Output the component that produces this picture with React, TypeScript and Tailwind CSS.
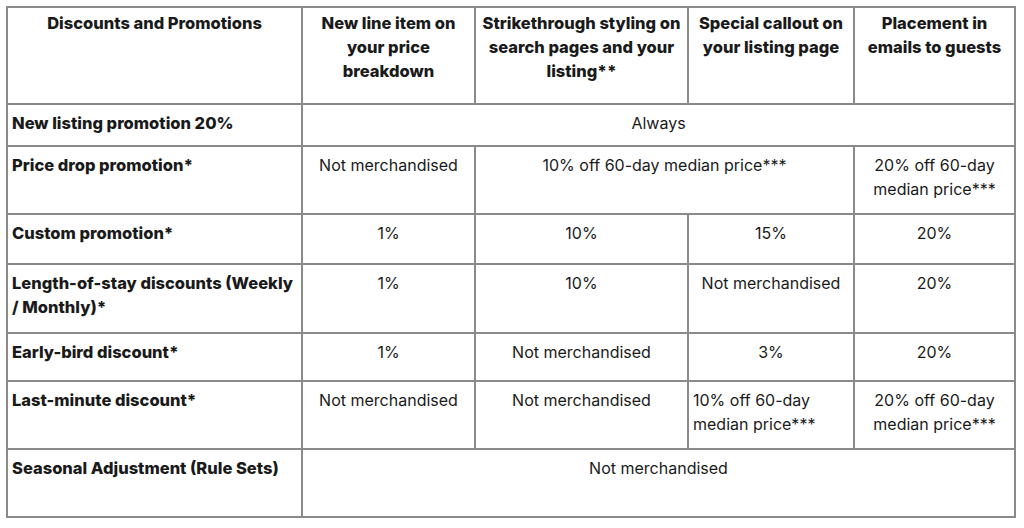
import React from "react";

const B = "border-2 border-[#8a8a8a]";

function Label({ children }: { children: React.ReactNode }) {
  return (
    <td className={`${B} align-top pl-[4px] pr-0 pt-[6px] font-extrabold text-[16.5px] text-left whitespace-nowrap`}>{children}</td>
  );
}

function Cell({
  children,
  span = 1,
  left = false,
}: {
  children?: React.ReactNode;
  span?: number;
  left?: boolean;
}) {
  return (
    <td
      colSpan={span}
      className={`${B} align-top pt-[6px] px-1 ${left ? "text-left pl-[4px]" : "text-center"}`}
    >
      {children}
    </td>
  );
}

const H = `${B} align-top pt-[3px] font-extrabold text-[16.5px]`;

export default function App() {
  return (
    <div
      className="w-[1024px] h-[528px] bg-white pt-[6px] pl-[6px] text-[16px] leading-[24px] text-[#1a1a1a]"
      style={{ fontFamily: "Inter, 'Noto Sans', sans-serif" }}
    >
      <table className="border-collapse w-[1008px] table-fixed">
        <colgroup>
          <col className="w-[295px]" />
          <col className="w-[173px]" />
          <col className="w-[213px]" />
          <col className="w-[166px]" />
          <col className="w-[161px]" />
        </colgroup>
        <thead>
          <tr className="h-[97px]">
            <th className={H}>Discounts and Promotions</th>
            <th className={`${H} px-2`}>New line item on your price breakdown</th>
            <th className={`${H} px-0`}>Strikethrough styling on search pages and your listing**</th>
            <th className={`${H} px-0`}>Special callout on your listing page</th>
            <th className={`${H} px-2`}>Placement in emails to guests</th>
          </tr>
        </thead>
        <tbody>
          <tr className="h-[42px]">
            <Label>New listing promotion 20%</Label>
            <Cell span={4}>Always</Cell>
          </tr>
          <tr className="h-[68px]">
            <Label>Price drop promotion*</Label>
            <Cell>Not merchandised</Cell>
            <Cell span={2}>10% off 60-day median price***</Cell>
            <Cell>20% off 60-day median price***</Cell>
          </tr>
          <tr className="h-[50px]">
            <Label>Custom promotion*</Label>
            <Cell>1%</Cell>
            <Cell>10%</Cell>
            <Cell>15%</Cell>
            <Cell>20%</Cell>
          </tr>
          <tr className="h-[69px]">
            <Label>
              Length-of-stay discounts (Weekly
              <br />/ Monthly)*
            </Label>
            <Cell>1%</Cell>
            <Cell>10%</Cell>
            <Cell>Not merchandised</Cell>
            <Cell>20%</Cell>
          </tr>
          <tr className="h-[48px]">
            <Label>Early-bird discount*</Label>
            <Cell>1%</Cell>
            <Cell>Not merchandised</Cell>
            <Cell>3%</Cell>
            <Cell>20%</Cell>
          </tr>
          <tr className="h-[68px]">
            <Label>Last-minute discount*</Label>
            <Cell>Not merchandised</Cell>
            <Cell>Not merchandised</Cell>
            <Cell left>10% off 60-day median price***</Cell>
            <Cell>20% off 60-day median price***</Cell>
          </tr>
          <tr className="h-[68px]">
            <Label>Seasonal Adjustment (Rule Sets)</Label>
            <Cell span={4}>Not merchandised</Cell>
          </tr>
        </tbody>
      </table>
    </div>
  );
}
